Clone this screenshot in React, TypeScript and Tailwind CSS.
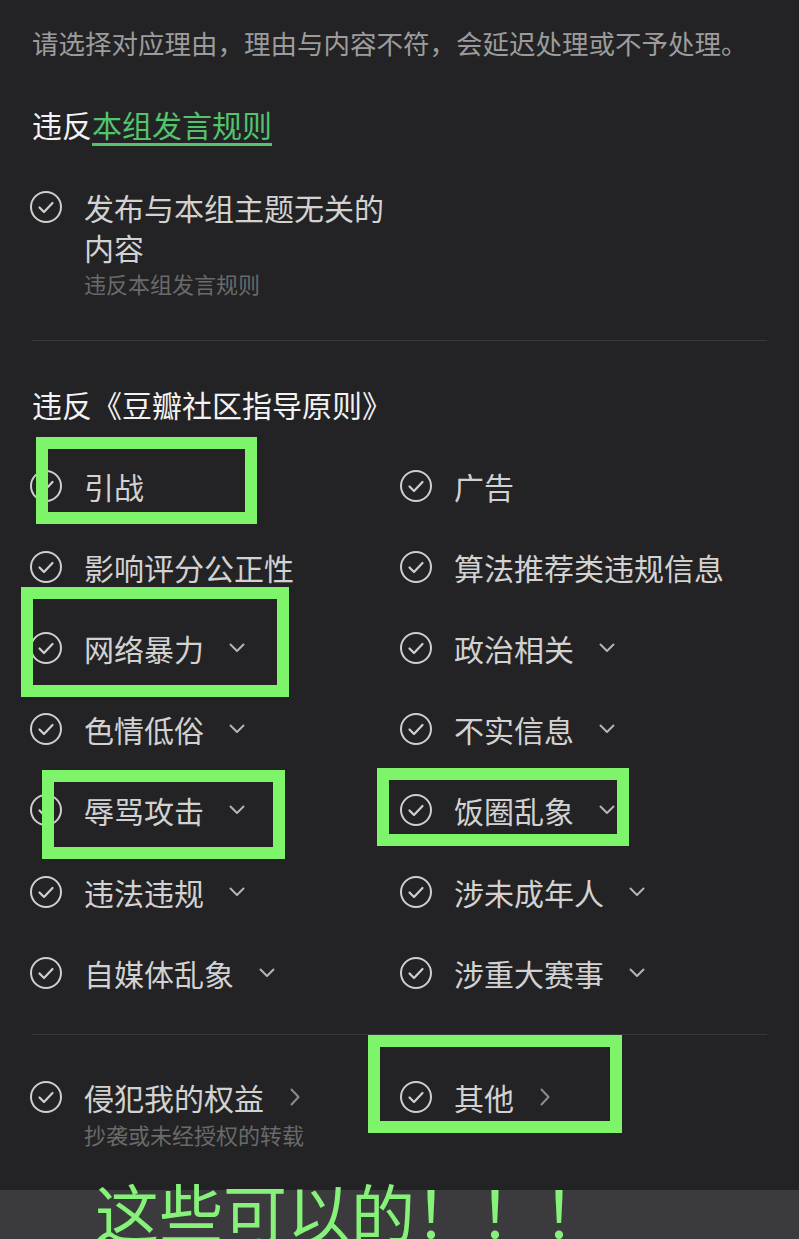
import React from "react";

const CheckIcon = () => (
  <svg width="32" height="32" viewBox="0 0 32 32" className="shrink-0" fill="none">
    <circle cx="16" cy="16" r="15" stroke="#cfcfcf" strokeWidth="2" />
    <path d="M9.5 16.5 L14 21 L22.5 12" stroke="#cfcfcf" strokeWidth="2.2" strokeLinecap="round" strokeLinejoin="round" />
  </svg>
);

const ChevronDown = () => (
  <svg width="16" height="10" viewBox="0 0 16 10" className="ml-[3px] shrink-0" fill="none">
    <path d="M1.5 1.5 L8 8 L14.5 1.5" stroke="#b4b4b4" strokeWidth="2" strokeLinecap="round" strokeLinejoin="round" />
  </svg>
);

const ChevronRight = () => (
  <svg width="10" height="18" viewBox="0 0 10 18" className="ml-[4px] shrink-0" fill="none">
    <path d="M1.5 1.5 L8.5 9 L1.5 16.5" stroke="#8c8c8c" strokeWidth="2" strokeLinecap="round" strokeLinejoin="round" />
  </svg>
);

type Item = { label: string; more?: boolean };

const rows: [Item, Item][] = [
  [{ label: "引战" }, { label: "广告" }],
  [{ label: "影响评分公正性" }, { label: "算法推荐类违规信息" }],
  [{ label: "网络暴力", more: true }, { label: "政治相关", more: true }],
  [{ label: "色情低俗", more: true }, { label: "不实信息", more: true }],
  [{ label: "辱骂攻击", more: true }, { label: "饭圈乱象", more: true }],
  [{ label: "违法违规", more: true }, { label: "涉未成年人", more: true }],
  [{ label: "自媒体乱象", more: true }, { label: "涉重大赛事", more: true }],
];

const Cell = ({ item }: { item: Item }) => (
  <div className="flex h-[81.2px] items-center gap-[22px]">
    <CheckIcon />
    <span className="text-[30px] leading-[40px] text-[#d2d2d2]">{item.label}</span>
    {item.more && <ChevronDown />}
  </div>
);

const Box = ({ className }: { className: string }) => (
  <div className={`absolute border-[12px] border-[#7ef46a] ${className}`} />
);

export default function App() {
  return (
    <div
      className="relative flex h-[1239px] w-[799px] flex-col overflow-hidden bg-[#232325]"
      style={{ fontFamily: '"Noto Sans CJK SC", "Noto Sans", sans-serif' }}
    >
      <div className="flex flex-col px-[32px]">
        <p className="mt-[25px] whitespace-nowrap text-[26.5px] leading-[36px] text-[#9c9c9c]">
          请选择对应理由，理由与内容不符，会延迟处理或不予处理。
        </p>

        <h2 className="mt-[43px] text-[30px] leading-[40px] text-[#f2f2f2]">
          违反
          <span className="text-[#52c46c] underline decoration-[3px] underline-offset-[6px]">本组发言规则</span>
        </h2>

        <div className="mt-[43px] grid grid-cols-[368px_1fr]">
          <div className="-ml-[2px] flex items-start gap-[22px]">
            <div className="pt-[4px]">
              <CheckIcon />
            </div>
            <div className="flex flex-col">
              <span className="text-[30px] leading-[40px] text-[#d2d2d2]">发布与本组主题无关的内容</span>
              <span className="mt-[1px] text-[22px] leading-[30px] text-[#6a6a6a]">违反本组发言规则</span>
            </div>
          </div>
        </div>

        <div className="mt-[42px] h-px bg-[#38383a]" />

        <h2 className="mt-[43px] text-[30px] leading-[40px] text-[#f2f2f2]">违反《豆瓣社区指导原则》</h2>

        <div className="-ml-[2px] mt-[21px] grid grid-cols-[370px_1fr]">
          {rows.map(([a, b], i) => (
            <React.Fragment key={i}>
              <Cell item={a} />
              <Cell item={b} />
            </React.Fragment>
          ))}
        </div>

        <div className="mt-[21px] h-px bg-[#38383a]" />

        <div className="-ml-[2px] mt-[42px] grid grid-cols-[370px_1fr]">
          <div className="flex flex-col">
            <div className="flex h-[40px] items-center gap-[22px]">
              <CheckIcon />
              <span className="text-[30px] leading-[40px] text-[#d2d2d2]">侵犯我的权益</span>
              <ChevronRight />
            </div>
            <span className="ml-[54px] mt-[1px] text-[22px] leading-[32px] text-[#6a6a6a]">抄袭或未经授权的转载</span>
          </div>
          <div className="flex h-[40px] items-center gap-[22px]">
            <CheckIcon />
            <span className="text-[30px] leading-[40px] text-[#d2d2d2]">其他</span>
            <ChevronRight />
          </div>
        </div>
      </div>

      <div className="mt-auto h-[49px] bg-[#3b3b3d]" />

      <Box className="left-[36px] top-[437px] h-[87px] w-[221px]" />
      <Box className="left-[21px] top-[587px] h-[110px] w-[268px]" />
      <Box className="left-[42px] top-[770px] h-[89px] w-[243px]" />
      <Box className="left-[377px] top-[768px] h-[78px] w-[252px]" />
      <Box className="left-[368px] top-[1035px] h-[98px] w-[254px]" />

      <div className="absolute left-[95px] top-[1178px] whitespace-nowrap text-[64px] leading-none text-[#86f27a]">
        这些可以的！！！
      </div>
    </div>
  );
}
